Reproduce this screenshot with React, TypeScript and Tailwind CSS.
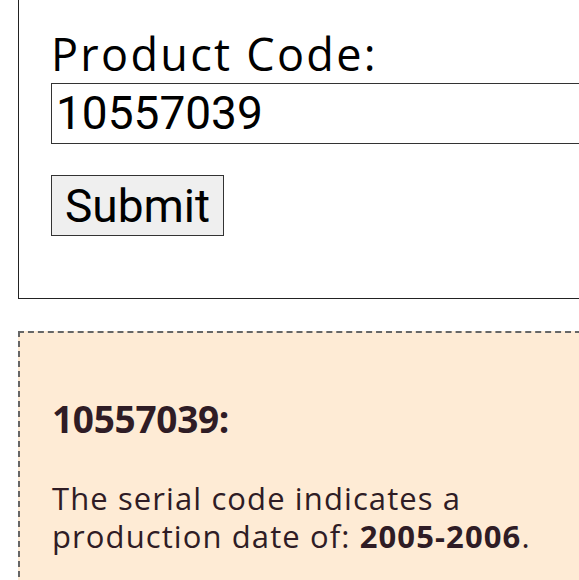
import React from 'react';

export default function App() {
  return (
    <div className="w-[579px] h-[580px] overflow-hidden bg-white font-['Open_Sans',sans-serif]">
      <div className="w-[760px] pl-[18px]">
        {/* Formulário do código */}
        <div className="border-l border-b border-[#222] pl-[32px] pt-[27px] pb-[62px]">
          <label className="block text-[45px] leading-[1.2] tracking-[2.3px] text-black mb-[2px]">
            Product Code:
          </label>
          <input
            readOnly
            value="10557039"
            className="block w-[640px] h-[61px] border border-[#333] px-[4px] text-[46px] text-black font-['Roboto',sans-serif] outline-none"
          />
          <button className="mt-[31px] h-[61px] px-[13px] border border-[#333] bg-[#efefef] text-[46px] leading-none text-black font-['Roboto',sans-serif]">
            Submit
          </button>
        </div>

        {/* Resultado */}
        <div className="mt-[32px] border-2 border-dashed border-[#666] bg-[#feebd5] pl-[32px] pt-[64px] pb-[60px] text-[#2f1c25]">
          <h2 className="text-[37px] leading-[1.2] font-bold tracking-[-0.3px]">10557039:</h2>
          <p className="mt-[38px] w-[540px] text-[31px] leading-[38px] tracking-[1.1px]">
            The serial code indicates a production date of:{' '}
            <strong className="font-bold">2005-2006</strong>.
          </p>
        </div>
      </div>
    </div>
  );
}
